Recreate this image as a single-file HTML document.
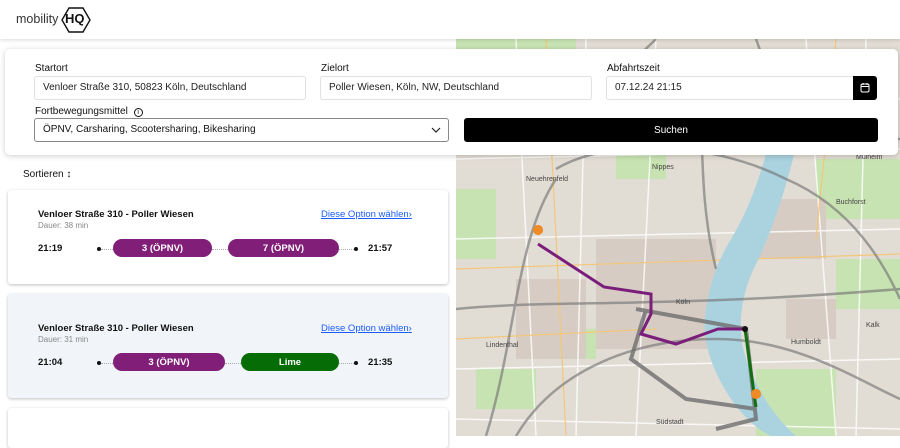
<!DOCTYPE html>
<html><head><meta charset="utf-8"><style>
*{box-sizing:border-box;margin:0;padding:0}
body{width:900px;height:436px;overflow:hidden;font-family:"Liberation Sans",Arial,sans-serif;background:#fff;position:relative;color:#111}
.hdr{position:absolute;left:0;top:0;width:900px;height:39px;background:#fff;box-shadow:0 1px 4px rgba(0,0,0,.15);z-index:3}
.map{position:absolute;left:456px;top:39px;width:444px;height:397px;overflow:hidden}
.panel{position:absolute;left:5px;top:49px;width:893px;height:106px;background:#fff;border-radius:5px;box-shadow:0 1px 6px rgba(0,0,0,.2);z-index:4}
.lbl{position:absolute;font-size:10px;color:#111}
.inp{position:absolute;height:24px;border:1px solid #dfe1e5;border-radius:3px;font-size:10px;padding:0 8px;line-height:22px;color:#222;background:#fff}
.card{position:absolute;left:8px;width:440px;border-radius:3px;box-shadow:0 1px 3px rgba(0,0,0,.25);background:#fff}
.t{position:absolute;left:30px;font-size:9.5px;font-weight:bold}
.d{position:absolute;left:30px;font-size:8px;color:#888}
.lnk{position:absolute;left:313px;font-size:9.5px;color:#1a5cff;text-decoration:underline}
.tm{position:absolute;font-size:9.5px;font-weight:bold}
.pill{position:absolute;height:18px;border-radius:9px;color:#fff;font-size:9.5px;font-weight:bold;display:flex;align-items:center;justify-content:center}
.dot{position:absolute;width:4px;height:4px;border-radius:2px;background:#111}
.dl{position:absolute;border-top:1px dotted #aaa;height:0}
</style></head><body>
<div class="hdr">
<span style="position:absolute;left:16px;top:12px;font-size:12.5px;color:#333">mobility</span>
<svg style="position:absolute;left:60px;top:5px" width="32" height="30" viewBox="0 0 32 30"><path d="M9 3 L23 3 L30 15 L23 27 L9 27 L2 15 Z" fill="none" stroke="#111" stroke-width="1.4"/></svg>
<span style="position:absolute;left:65px;top:11px;font-size:13px;font-weight:bold;color:#111">HQ</span>
</div>
<div class="map">
<svg width="444" height="397" viewBox="0 0 444 397">
<rect width="444" height="397" fill="#e2ddd4"/>
<g fill="#c8e3b2"><path d="M0 0h120v60H0z"/><path d="M0 150h40v70H0z"/><path d="M360 120h84v60h-84z"/><path d="M300 330h80v67h-80z"/><path d="M20 330h60v40H20z"/><path d="M380 220h64v50h-64z"/><path d="M160 110h50v30h-50z"/><path d="M0 60h30v40H0z"/><path d="M100 290h40v30h-40z"/></g>
<g fill="#d6ccc4"><rect x="140" y="200" width="120" height="110"/><rect x="60" y="240" width="70" height="80"/><rect x="300" y="160" width="70" height="60"/><rect x="330" y="260" width="50" height="40"/></g>
<g fill="none" stroke="#fff" stroke-width="1.5" opacity=".8"><path d="M0 120L444 110M0 200L444 190M0 330L444 320M60 0L80 397M130 0L120 397M350 0L380 397M410 0L400 397M0 40L444 60M0 380L444 390M200 0L180 397"/></g>
<g fill="none" stroke="#f3c77a" stroke-width="1.2"><path d="M0 230L444 215M90 0L110 397M0 300L200 290M380 0L360 200"/></g>
<path d="M310 115 C300 150 290 175 275 200 C262 222 255 240 250 270 C245 300 255 330 275 360 C285 375 300 390 315 397 L340 397 C320 380 300 350 290 320 C280 290 285 255 300 225 C315 195 330 150 338 115 Z" fill="#aad3df"/>
<g fill="none" stroke="#777" stroke-width="2.5" opacity=".65"><path d="M0 270 C100 260 200 270 444 250"/><path d="M100 130 C150 100 250 100 330 140 C400 170 430 230 444 260"/><path d="M60 397 C100 330 180 300 260 300 C340 300 400 340 444 360"/><path d="M240 20 C250 80 240 150 260 230"/><path d="M0 100 C80 90 140 60 200 0"/><path d="M300 0 C320 60 360 100 444 100"/><path d="M30 397 C60 300 60 200 100 140"/></g>
<g fill="none" stroke="#6f6f6f" stroke-width="4" opacity=".8"><path d="M180 270 L290 290 L300 380 L260 390"/><path d="M190 270 L175 320 L230 360 L300 370"/></g>
<path d="M82 205 L148 248 L195 255 L195 275 L185 295 L220 305 L262 290 L290 290" fill="none" stroke="#7b1d7b" stroke-width="3"/>
<path d="M289 290 L300 368" stroke="#107010" stroke-width="3"/>
<circle cx="289" cy="290" r="3" fill="#111"/>
<path d="M82 196 a5 5 0 1 1 0.1 0 L82 210 Z" fill="#f08a24"/>
<path d="M300 360 a5 5 0 1 1 0.1 0 L300 374 Z" fill="#f08a24"/>
<g font-size="7" fill="#444"><text x="196" y="130">Nippes</text><text x="70" y="142">Neuehrenfeld</text><text x="220" y="265">Köln</text><text x="380" y="165">Buchforst</text><text x="400" y="120">Mülheim</text><text x="30" y="308">Lindenthal</text><text x="335" y="305">Humboldt</text><text x="200" y="385">Südstadt</text><text x="410" y="288">Kalk</text></g>
</svg>
</div>
<div class="panel">
<div class="lbl" style="left:30px;top:14px">Startort</div>
<div class="inp" style="left:29px;top:27px;width:272px">Venloer Straße 310, 50823 Köln, Deutschland</div>
<div class="lbl" style="left:316px;top:14px">Zielort</div>
<div class="inp" style="left:315px;top:27px;width:272px">Poller Wiesen, Köln, NW, Deutschland</div>
<div class="lbl" style="left:602px;top:14px">Abfahrtszeit</div>
<div class="inp" style="left:601px;top:27px;width:248px;border-radius:3px 0 0 3px">07.12.24 21:15</div>
<div style="position:absolute;left:848px;top:27px;width:24px;height:24px;background:#000;border-radius:0 3px 3px 0"><svg width="24" height="24"><rect x="8" y="8" width="8" height="8" rx="1.5" fill="none" stroke="#fff" stroke-width="1"/><path d="M8 10.5h8M10 7v2M14 7v2" stroke="#fff" stroke-width="1"/></svg></div>
<div class="lbl" style="left:30px;top:57px">Fortbewegungsmittel <span style="display:inline-block;width:9px;height:9px;border:1px solid #111;border-radius:50%;font-size:7px;text-align:center;line-height:8px;margin-left:3px">i</span></div>
<div class="inp" style="left:29px;top:69px;width:415px;height:24px;border-color:#888;color:#111">ÖPNV, Carsharing, Scootersharing, Bikesharing</div>
<svg style="position:absolute;left:426px;top:76px" width="10" height="10"><path d="M1 3l4 4 4-4" fill="none" stroke="#222" stroke-width="1.2"/></svg>
<div style="position:absolute;left:459px;top:69px;width:414px;height:24px;background:#000;border-radius:3px;color:#fff;font-size:10px;display:flex;align-items:center;justify-content:center">Suchen</div>
</div>
<div style="position:absolute;left:23px;top:169px;font-size:10px">Sortieren <span style="font-weight:bold">↕</span></div>
<div class="card" style="top:190px;height:94px">
<div class="t" style="top:19px">Venloer Straße 310 - Poller Wiesen</div>
<div class="d" style="top:31px">Dauer: 38 min</div>
<div class="lnk" style="top:19px">Diese Option wählen<span style="text-decoration:none">›</span></div>
<div class="tm" style="left:30px;top:53px">21:19</div>
<div class="dot" style="left:89px;top:57px"></div><div class="dl" style="left:93px;top:59px;width:12px"></div>
<div class="pill" style="left:105px;top:49px;width:99px;background:#811e78">3 (ÖPNV)</div>
<div class="dl" style="left:204px;top:59px;width:16px"></div>
<div class="pill" style="left:220px;top:49px;width:111px;background:#811e78">7 (ÖPNV)</div>
<div class="dl" style="left:331px;top:59px;width:15px"></div><div class="dot" style="left:346px;top:57px"></div>
<div class="tm" style="left:360px;top:53px">21:57</div>
</div>
<div class="card" style="top:294px;height:104px;background:#f1f4f8">
<div class="t" style="top:29px">Venloer Straße 310 - Poller Wiesen</div>
<div class="d" style="top:41px">Dauer: 31 min</div>
<div class="lnk" style="top:29px">Diese Option wählen<span style="text-decoration:none">›</span></div>
<div class="tm" style="left:30px;top:63px">21:04</div>
<div class="dot" style="left:89px;top:67px"></div><div class="dl" style="left:93px;top:69px;width:12px"></div>
<div class="pill" style="left:105px;top:59px;width:112px;background:#811e78">3 (ÖPNV)</div>
<div class="dl" style="left:217px;top:69px;width:16px"></div>
<div class="pill" style="left:233px;top:59px;width:98px;background:#066d06">Lime</div>
<div class="dl" style="left:331px;top:69px;width:15px"></div><div class="dot" style="left:346px;top:67px"></div>
<div class="tm" style="left:360px;top:63px">21:35</div>
</div>
<div class="card" style="top:408px;height:40px"></div>
</body></html>
